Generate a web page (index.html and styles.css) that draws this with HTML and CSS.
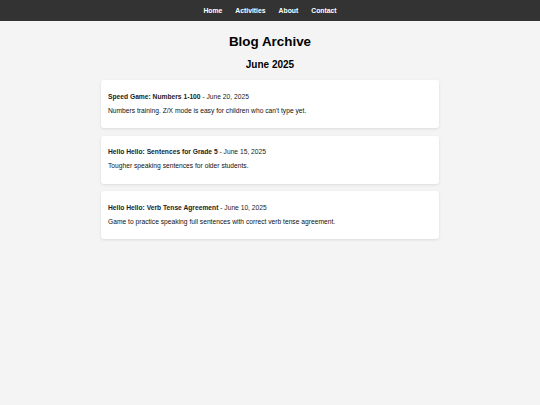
FILE: index.html
```html
<!DOCTYPE html>
<html>
<head>
<meta charset="utf-8">
<link rel="stylesheet" href="styles.css">
</head>
<body>
<nav class="nav">
  <a href="#">Home</a>
  <a href="#">Activities</a>
  <a href="#">About</a>
  <a href="#">Contact</a>
</nav>
<main class="main">
  <h1 class="title">Blog Archive</h1>
  <h2 class="month">June 2025</h2>
  <div class="post">
    <h3 class="post-title"><strong>Speed Game: Numbers 1-100</strong> - June 20, 2025</h3>
    <p class="post-desc">Numbers training. Z/X mode is easy for children who can't type yet.</p>
  </div>
  <div class="post">
    <h3 class="post-title"><strong>Hello Hello: Sentences for Grade 5</strong> - June 15, 2025</h3>
    <p class="post-desc">Tougher speaking sentences for older students.</p>
  </div>
  <div class="post">
    <h3 class="post-title"><strong>Hello Hello: Verb Tense Agreement</strong> - June 10, 2025</h3>
    <p class="post-desc">Game to practice speaking full sentences with correct verb tense agreement.</p>
  </div>
</main>
</body>
</html>
```
FILE: styles.css
```css
html, body {
  margin: 0;
  padding: 0;
  background: #f4f4f4;
  font-family: "Liberation Sans", Arial, sans-serif;
  color: #333;
}
.nav {
  background: #333;
  height: 21px;
  display: flex;
  justify-content: center;
  align-items: center;
}
.nav a {
  color: #fff;
  text-decoration: none;
  font-weight: bold;
  font-size: 6.8px;
  padding: 0 6.5px;
}
.main {
  width: 338px;
  margin: 0 auto;
  padding-top: 13px;
}
.title {
  text-align: center;
  font-size: 13.4px;
  margin: 0 0 9px;
  color: #000;
  line-height: 16px;
}
.month {
  text-align: center;
  font-size: 10px;
  margin: 0 0 9px;
  color: #000;
  line-height: 12px;
}
.post {
  background: #fff;
  border-radius: 3px;
  box-shadow: 0 1px 3px rgba(0,0,0,0.1);
  padding: 7px;
  margin-bottom: 7.5px;
  height: 34px;
}
.post-title {
  font-size: 6.7px;
  font-weight: normal;
  margin: 5.5px 0 0;
  line-height: 8px;
  color: #222;
}
.post-title strong {
  font-weight: bold;
}
.post-desc {
  font-size: 6.7px;
  margin: 6px 0 0;
  line-height: 8px;
  color: #111;
}
```
